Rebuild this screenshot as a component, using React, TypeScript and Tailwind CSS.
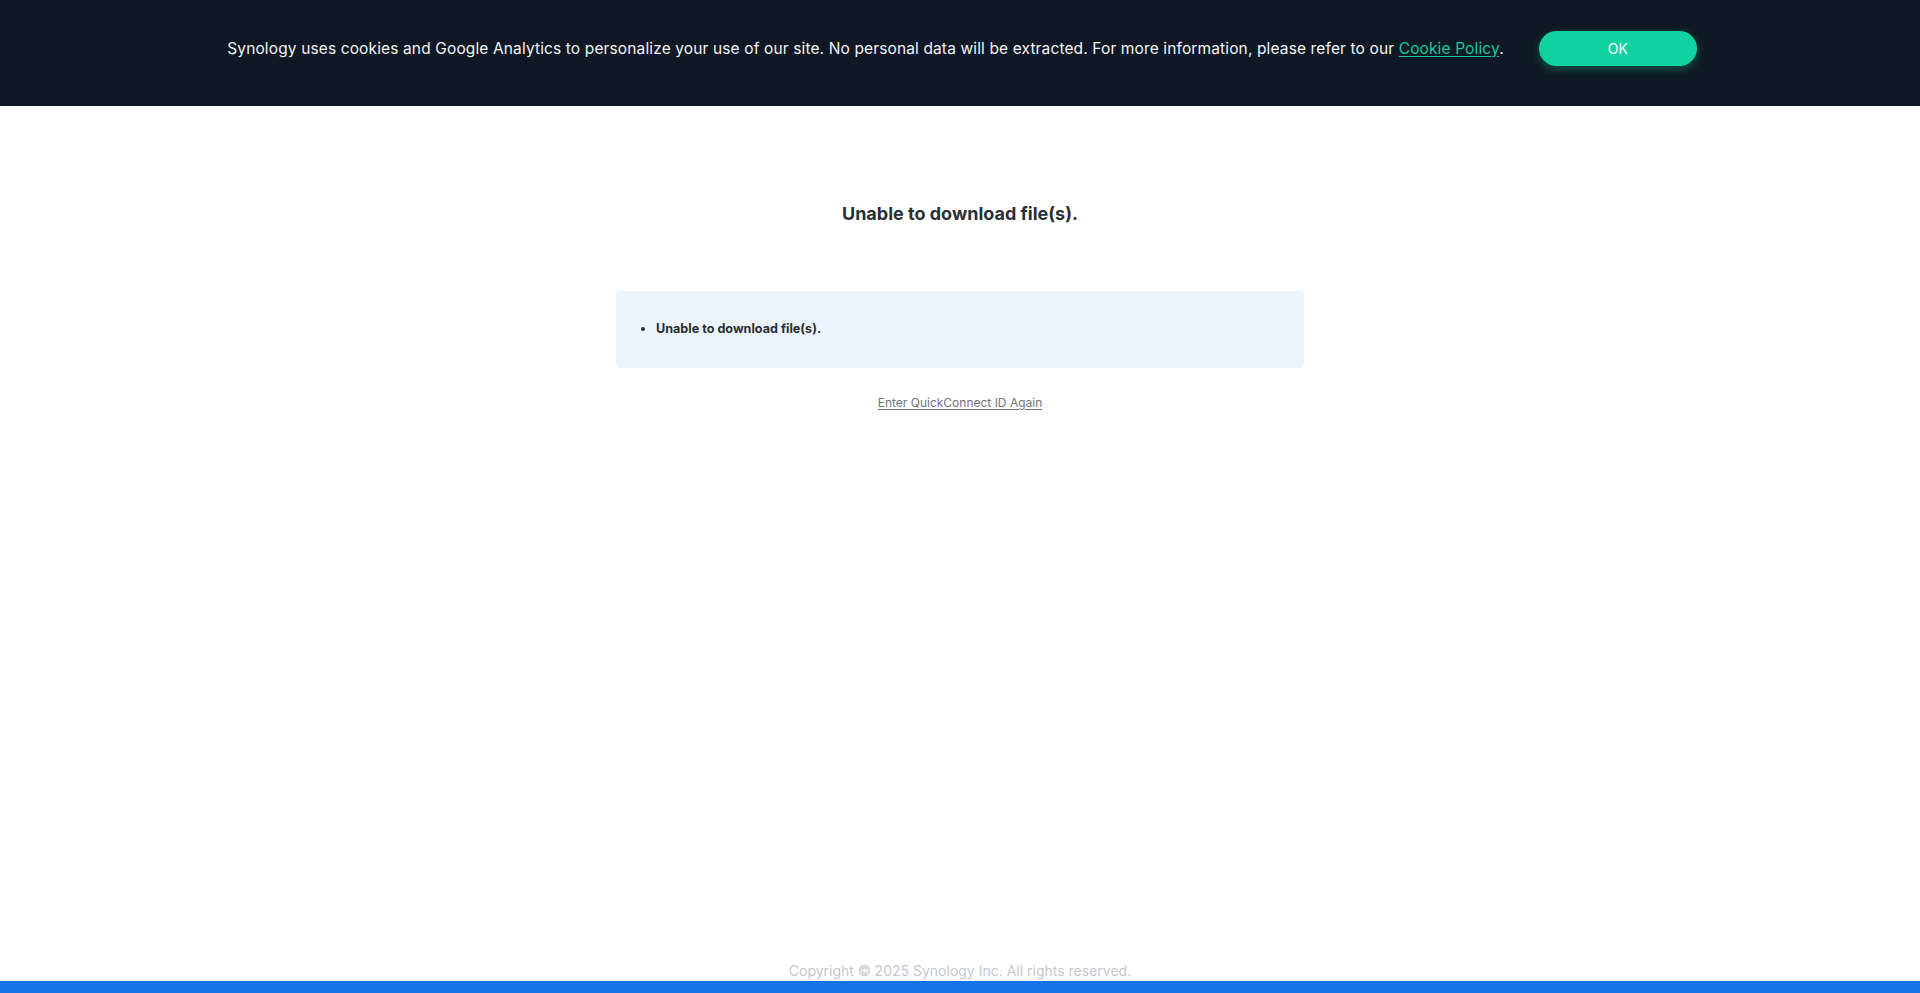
/** Synology QuickConnect — download error page with cookie banner */

const font = { fontFamily: 'Inter, "Noto Sans", sans-serif' };

function CookieBanner() {
  return (
    <div className="h-[106px] w-full bg-[#0f1824] pt-[31px] pl-[4px]">
      <div className="flex items-center justify-center gap-[35px]">
        <p className="text-[15.5px] leading-[20px] tracking-[0.13px] text-[#f2f4f7]">
          Synology uses cookies and Google Analytics to personalize your use of our site. No personal data will be
          extracted. For more information, please refer to our{' '}
          <a href="#" className="text-[#14c89c] underline underline-offset-2">
            Cookie Policy
          </a>
          .
        </p>
        <button className="h-[35px] w-[158px] rounded-full bg-[#10d19f] text-[14px] text-white shadow-[0_3px_10px_rgba(16,209,159,0.35)]">
          OK
        </button>
      </div>
    </div>
  );
}

export default function App() {
  return (
    <div className="flex min-h-screen flex-col bg-white" style={font}>
      <CookieBanner />

      <main className="flex flex-1 flex-col items-center">
        <h1 className="mt-[96px] text-[18px] font-bold leading-[24px] text-[#2a2f35]">
          Unable to download file(s).
        </h1>

        <div className="mt-[65px] flex h-[77px] w-[688px] items-center rounded-[4px] bg-[#ebf4fd] pl-[40px]">
          <ul className="list-disc text-[12.6px] font-bold text-[#2a2f35]">
            <li>Unable to download file(s).</li>
          </ul>
        </div>

        <a href="#" className="mt-[26px] text-[12px] text-[#707478] underline underline-offset-2">
          Enter QuickConnect ID Again
        </a>
      </main>

      <footer className="flex flex-col items-center">
        <p className="text-[14px] leading-[20px] text-[#c4c7cb]">Copyright © 2025 Synology Inc. All rights reserved.</p>
        <div className="h-[12px] w-full bg-[#1473e6]" />
      </footer>
    </div>
  );
}
